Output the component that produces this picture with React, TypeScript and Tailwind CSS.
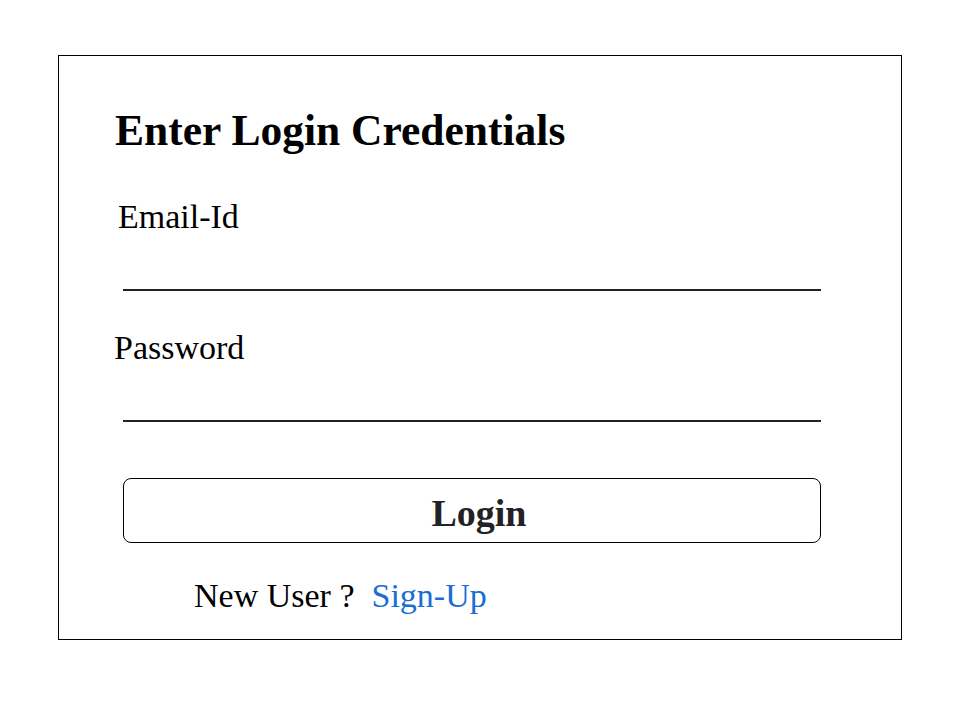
export default function App() {
  return (
    <div className="min-h-screen bg-white pt-[55px] pl-[58px] font-['Liberation_Serif',serif] text-black">
      <div className="w-[844px] h-[585px] border-[1.5px] border-black pl-[56px] flex flex-col items-start">
        <h1 className="mt-[53px] text-[43.5px] leading-none font-bold">Enter Login Credentials</h1>

        <label className="mt-[47px] ml-[3px] text-[34px] leading-none">Email-Id</label>
        <input
          type="email"
          className="ml-[8px] w-[698px] h-[57px] border-b-2 border-[#222] outline-none bg-transparent"
        />

        <label className="mt-[40px] -ml-[1px] text-[34px] leading-none">Password</label>
        <input
          type="password"
          className="ml-[8px] w-[698px] h-[57px] border-b-2 border-[#222] outline-none bg-transparent"
        />

        <button className="mt-[56px] ml-[8px] w-[698px] h-[65px] pl-[14px] pt-[6px] rounded-lg border-[1.5px] border-black bg-white text-[38px] leading-none font-bold text-[#222]">
          Login
        </button>

        <p className="mt-[36px] ml-[79px] text-[34px] leading-none">
          New User ?&nbsp; <a href="#" className="text-[#1a6dd3]">Sign-Up</a>
        </p>
      </div>
    </div>
  );
}
